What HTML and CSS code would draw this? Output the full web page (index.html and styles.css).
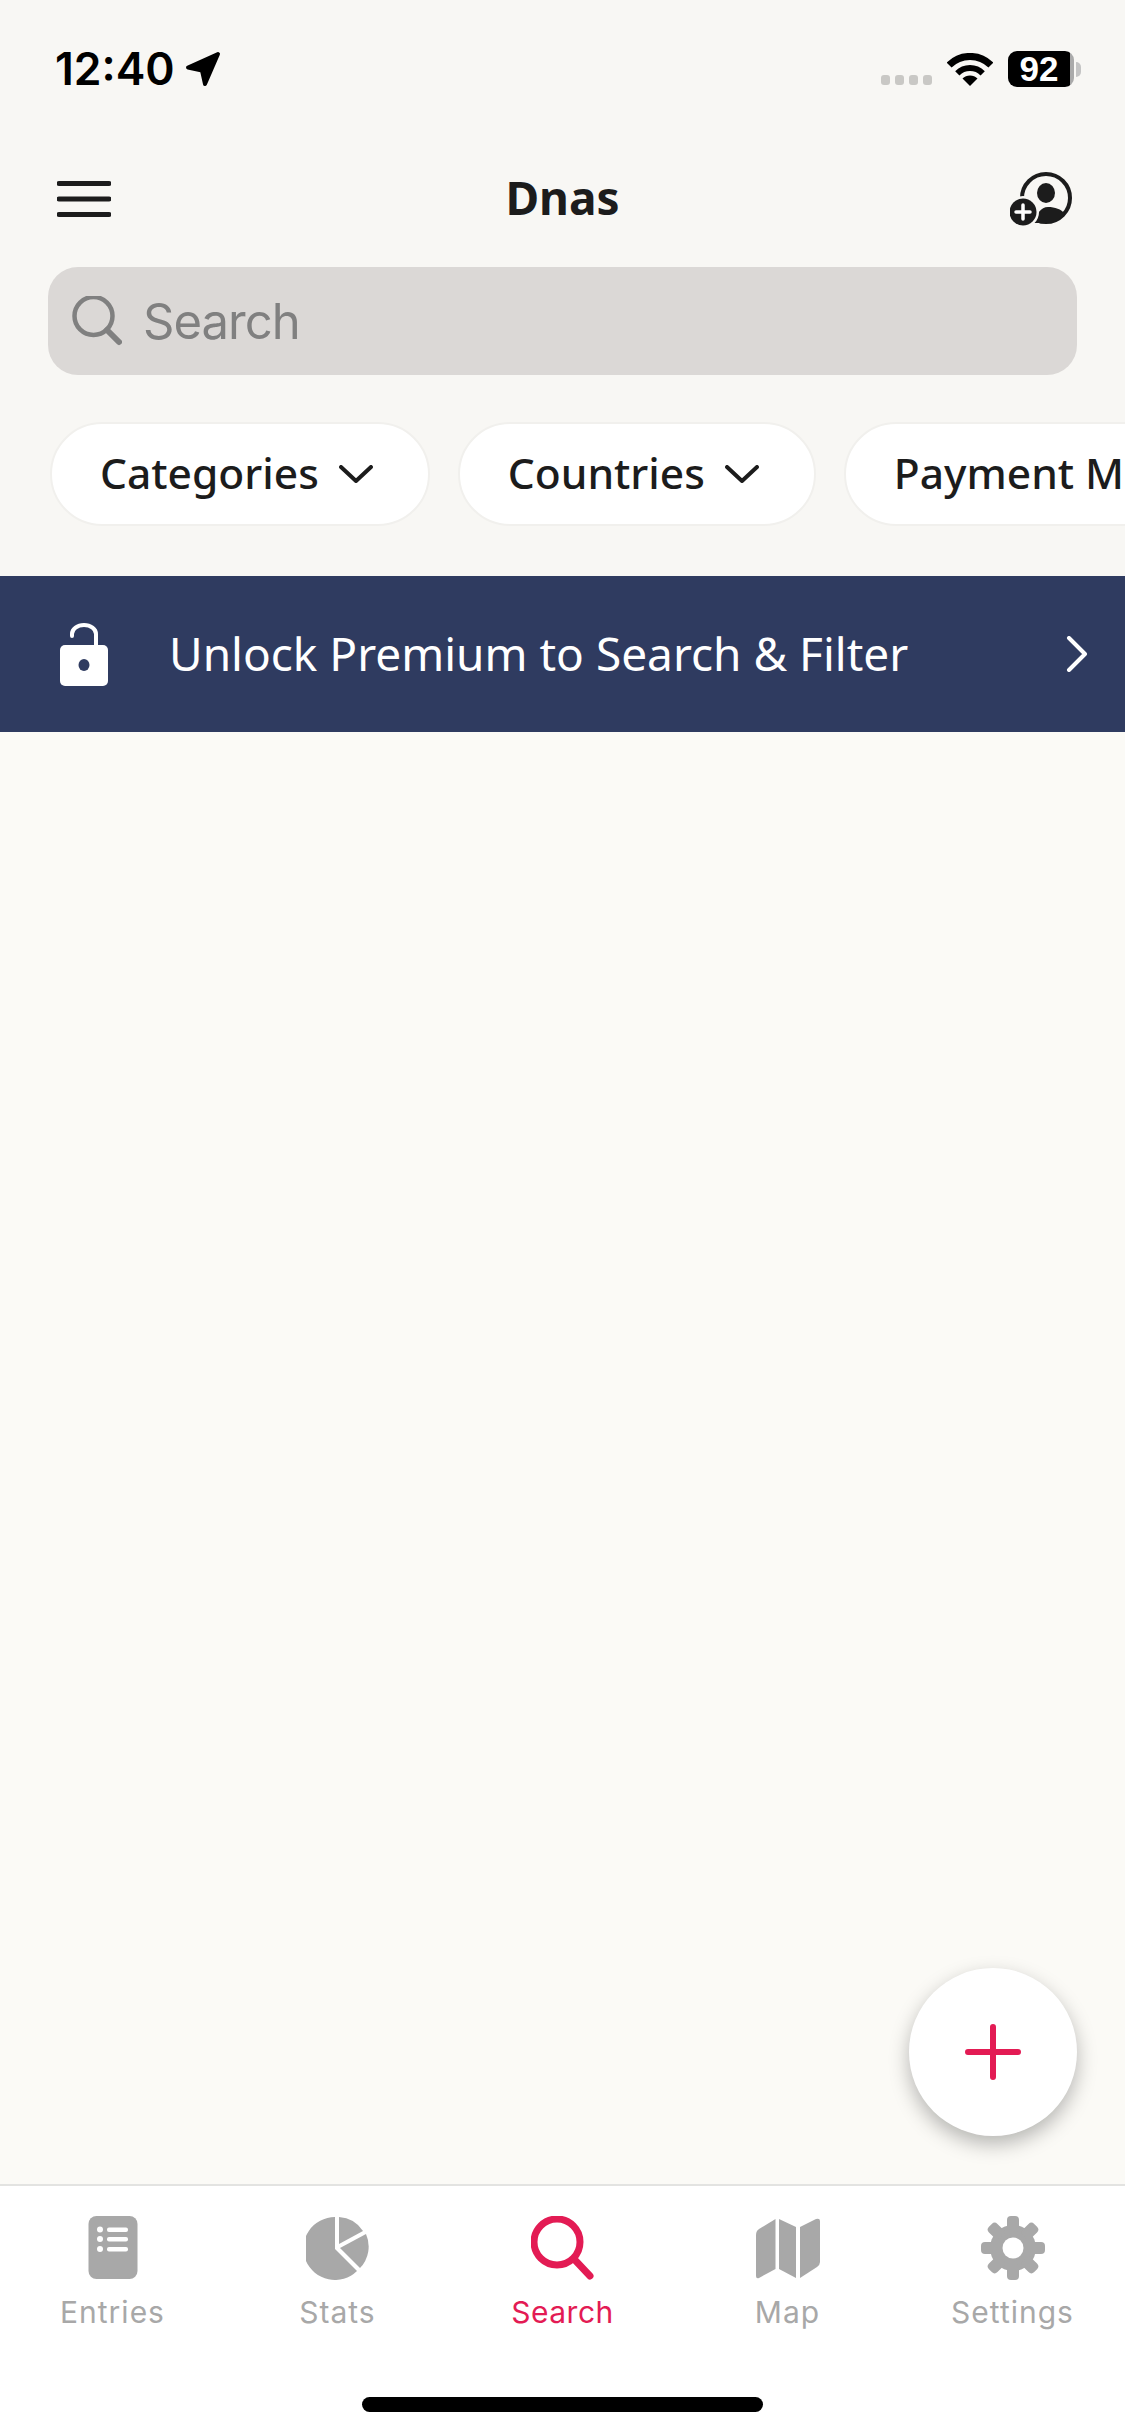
FILE: index.html

```html
<!DOCTYPE html>
<html lang="en">
<head>
  <meta charset="UTF-8" />
  <title>Dnas</title>
  <link rel="stylesheet" href="styles.css">
</head>
<body>
  <div class="app">
    <div class="top">
      <div class="status">
        <span class="time">12:40</span>
        <svg class="arrow" width="36" height="36" viewBox="0 0 36 36"><path d="M33 3L3 16.500l14 3L20 33z"/></svg>
        <div class="dots"><i></i><i></i><i></i><i></i></div>
        <svg class="wifi" width="46" height="33" viewBox="0 0 46 33">
          <path class="wifi-arc" d="M2.100 12.100a29.500 29.500 0 0 1 41.800 0"/>
          <path class="wifi-mid" d="M10.300 20.300a18 18 0 0 1 25.400 0"/>
          <path d="M23 33l-7.500-7.500a10.600 10.600 0 0 1 15 0z"/>
        </svg>
        <div class="battery">92</div>
        <div class="nub"></div>
      </div>

      <div class="header">
        <svg class="menu" width="54" height="36" viewBox="0 0 54 36"><path class="burger" d="M2 2.500h50M2 18h50M2 33.500h50"/></svg>
        <h1>Dnas</h1>
        <svg class="profile" width="64" height="54" viewBox="0 0 64 54">
          <circle class="ring" cx="36" cy="26" r="24"/>
          <ellipse cx="36" cy="21" rx="9" ry="10"/>
          <path d="M24 51c2-9 7-16 14-16 7 0 13 2 17 7a24 24 0 0 1-19 9z"/>
          <circle class="badge-gap" cx="13" cy="40" r="16"/>
          <circle cx="13" cy="40" r="13.500"/>
          <path class="badge-plus" d="M13 33v14M6 40h14"/>
        </svg>
      </div>

      <div class="searchbar">
        <svg width="50" height="50" viewBox="0 0 50 50">
          <circle class="lens" cx="21.500" cy="20" r="19"/>
          <path class="lens handle" d="M35 34l12 12"/>
        </svg>
        <span>Search</span>
      </div>

      <div class="chips">
        <div class="chip"><span>Categories</span><svg width="34" height="18" viewBox="0 0 34 18"><path d="M2 2l15 14L32 2"/></svg></div>
        <div class="chip"><span>Countries</span><svg width="34" height="18" viewBox="0 0 34 18"><path d="M2 2l15 14L32 2"/></svg></div>
        <div class="chip"><span>Payment Methods</span><svg width="34" height="18" viewBox="0 0 34 18"><path d="M2 2l15 14L32 2"/></svg></div>
      </div>
    </div>

    <div class="banner">
      <svg width="48" height="63" viewBox="0 0 48 63">
        <path class="shackle" d="M12 13v-2a12 9 0 0 1 24 0v13"/>
        <rect y="22" width="48" height="41" rx="5" fill="#fff"/>
        <ellipse cx="24" cy="42" rx="5.500" ry="6" fill="#2f3b60"/>
      </svg>
      <span>Unlock Premium to Search &amp; Filter</span>
      <svg class="go" width="22" height="36" viewBox="0 0 22 36"><path d="M3 2l16 16L3 34"/></svg>
    </div>

    <div class="main">
      <div class="fab">
        <svg width="56" height="56" viewBox="0 0 56 56"><path d="M28 3v50M3 28h50"/></svg>
      </div>
    </div>

    <div class="tabbar">
      <div class="tabs">
        <div class="tab">
          <svg width="64" height="64" viewBox="0 0 64 64">
            <rect x="7.500" y="0" width="49" height="63" rx="8" fill="#a8a8a8"/>
            <g fill="#fff">
              <circle cx="19" cy="13.500" r="3"/><circle cx="19" cy="23" r="3"/><circle cx="19" cy="33" r="3"/>
              <rect x="26" y="11.500" width="21" height="4.500" rx="2"/>
              <rect x="26" y="21" width="21" height="4.500" rx="2"/>
              <rect x="26" y="31" width="21" height="4.500" rx="2"/>
            </g>
          </svg>
          <span>Entries</span>
        </div>
        <div class="tab">
          <svg width="64" height="64" viewBox="0 0 64 64" fill="#a8a8a8">
            <path d="M29 1v32l22 22A31.500 31.500 0 1 1 29 1z"/>
            <path d="M33 1a31 31 0 0 1 24 14L33 28z"/>
            <path d="M34 32l26-14a31 31 0 0 1-6 34z"/>
          </svg>
          <span>Stats</span>
        </div>
        <div class="tab active">
          <svg width="64" height="64" viewBox="0 0 64 64">
            <circle class="tab-lens" cx="26" cy="26" r="23"/>
            <path class="tab-lens" d="M43 43l16 17"/>
          </svg>
          <span>Search</span>
        </div>
        <div class="tab">
          <svg width="64" height="64" viewBox="0 0 64 64" fill="#a8a8a8">
            <path d="M19.500 3v50L3 62q-3 1-3-2V19q0-4 3-6z"/>
            <path d="M23 3l17 8v51l-17-9z"/>
            <path d="M44 11l16-8q4-1 4 2v41q0 3-3 5l-17 11z"/>
          </svg>
          <span>Map</span>
        </div>
        <div class="tab">
          <svg width="64" height="64" viewBox="0 0 64 64" fill="#a8a8a8">
            <circle cx="32" cy="32" r="23"/>
            <rect x="26" y="0" width="12" height="16" rx="4"/>
            <rect x="26" y="0" width="12" height="16" rx="4" transform="rotate(45 32 32)"/>
            <rect x="26" y="0" width="12" height="16" rx="4" transform="rotate(90 32 32)"/>
            <rect x="26" y="0" width="12" height="16" rx="4" transform="rotate(135 32 32)"/>
            <rect x="26" y="0" width="12" height="16" rx="4" transform="rotate(180 32 32)"/>
            <rect x="26" y="0" width="12" height="16" rx="4" transform="rotate(225 32 32)"/>
            <rect x="26" y="0" width="12" height="16" rx="4" transform="rotate(270 32 32)"/>
            <rect x="26" y="0" width="12" height="16" rx="4" transform="rotate(315 32 32)"/>
            <circle cx="32" cy="32" r="10.500" fill="#fff"/>
          </svg>
          <span>Settings</span>
        </div>
      </div>
      <div class="home"></div>
    </div>
  </div>
</body>
</html>
```

FILE: styles.css

```css
body {
  margin: 0;
  font-family: "Noto Sans", sans-serif;
  color: #1c1c1c;
}
svg {
  display: block;
  flex: none;
}
.app {
  width: 1125px;
  height: 2436px;
  display: flex;
  flex-direction: column;
  overflow: hidden;
  background: #fbfaf6;
}
.top {
  background: #f8f7f4;
  height: 576px;
  box-sizing: border-box;
  padding-top: 51px;
}

/* status bar */
.status {
  display: flex;
  align-items: center;
  height: 36px;
  padding: 0 44px 0 55px;
}
.time {
  font-family: Inter, sans-serif;
  font-weight: 600;
  font-size: 44.500px;
  line-height: 36px;
  color: #000;
}
.arrow {
  margin-left: 10px;
}
.arrow path {
  fill: #000;
  stroke: #000;
  stroke-width: 4;
  stroke-linejoin: round;
}
.dots {
  display: flex;
  gap: 5px;
  margin-left: auto;
  align-self: flex-end;
  margin-bottom: 2px;
}
.dots i {
  width: 9px;
  height: 10px;
  border-radius: 3px;
  background: #c9c8c5;
}
.wifi {
  margin-left: 15px;
}
.wifi-arc {
  fill: none;
  stroke: #000;
  stroke-width: 7;
}
.wifi-mid {
  fill: none;
  stroke: #000;
  stroke-width: 6;
}
.battery {
  width: 66px;
  height: 36px;
  margin-left: 15px;
  border-radius: 9px;
  background: linear-gradient(90deg, #000 94%, #aaa 94%);
  color: #fff;
  font-family: "Liberation Sans", sans-serif;
  font-weight: 700;
  font-size: 35px;
  line-height: 36px;
  text-align: center;
  padding-right: 4px;
  box-sizing: border-box;
}
.nub {
  width: 5px;
  height: 15px;
  margin-left: 2px;
  border-radius: 0 8px 8px 0;
  background: #c4c4c4;
}

/* header */
.header {
  display: grid;
  grid-template-columns: 1fr auto 1fr;
  align-items: center;
  height: 54px;
  margin-top: 85px;
  padding: 0 51px;
}
.menu {
  margin-left: 6px;
}
.burger {
  fill: none;
  stroke: #1c1c1c;
  stroke-width: 5;
  stroke-linecap: round;
}
h1 {
  margin: 0 0 3px;
  font-size: 46px;
  font-weight: 700;
  line-height: 51px;
}
.profile {
  justify-self: end;
  fill: #1c1c1c;
}
.ring {
  fill: none;
  stroke: #1c1c1c;
  stroke-width: 4;
}
.badge-gap {
  fill: #f8f7f4;
}
.badge-plus {
  fill: none;
  stroke: #fff;
  stroke-width: 3.500;
  stroke-linecap: round;
}

/* search */
.searchbar {
  display: flex;
  align-items: center;
  gap: 21px;
  height: 108px;
  margin: 41px 48px 0;
  padding-left: 24px;
  border-radius: 30px;
  background: #dbd8d6;
  color: #808080;
  font-family: Inter, sans-serif;
  font-size: 49px;
  letter-spacing: -1px;
}
.lens {
  fill: none;
  stroke: #808080;
  stroke-width: 4.500;
}
.handle {
  stroke-width: 6;
  stroke-linecap: round;
}

/* filter chips */
.chips {
  display: flex;
  gap: 28px;
  margin-top: 47px;
  padding-left: 50px;
  overflow: hidden;
}
.chip {
  display: flex;
  align-items: center;
  gap: 20px;
  flex: none;
  height: 104px;
  box-sizing: border-box;
  padding: 0 55px 0 48px;
  border: 2px solid #f1f0ed;
  border-radius: 52px;
  background: #fff;
  font-size: 42.500px;
  font-weight: 500;
  white-space: nowrap;
}
.chip span {
  margin-bottom: 4px;
}
.chip path {
  fill: none;
  stroke: #1c1c1c;
  stroke-width: 4;
  stroke-linecap: round;
  stroke-linejoin: round;
}

/* premium banner */
.banner {
  display: flex;
  align-items: center;
  flex: none;
  height: 156px;
  padding: 0 37px 0 60px;
  background: #2f3b60;
  color: #fff;
  font-size: 46px;
}
.banner span {
  margin-left: 61px;
  margin-bottom: 2px;
}
.shackle, .go path {
  fill: none;
  stroke: #fff;
  stroke-width: 4;
  stroke-linecap: round;
  stroke-linejoin: round;
}
.go {
  margin-left: auto;
}

/* content + floating button */
.main {
  flex: 1;
  position: relative;
}
.fab {
  position: absolute;
  left: 909px;
  bottom: 48px;
  width: 168px;
  height: 168px;
  display: flex;
  align-items: center;
  justify-content: center;
  border-radius: 50%;
  background: #fff;
  box-shadow: 0 8px 20px rgba(0,0,0,0.28);
}
.fab path {
  fill: none;
  stroke: #e31b54;
  stroke-width: 6;
  stroke-linecap: round;
}

/* tab bar */
.tabbar {
  flex: none;
  height: 252px;
  box-sizing: border-box;
  border-top: 2px solid #e3e3e1;
  background: #fff;
  padding-top: 30px;
  display: flex;
  flex-direction: column;
}
.tabs {
  display: grid;
  grid-template-columns: repeat(5, 225px);
}
.tab {
  display: flex;
  flex-direction: column;
  align-items: center;
  color: #a8a8a8;
  font-family: Inter, sans-serif;
  font-size: 30px;
  line-height: 36px;
  letter-spacing: 1px;
}
.tab span {
  margin-top: 14px;
}
.tab.active {
  color: #e31b54;
  letter-spacing: 0.500px;
}
.tab-lens {
  fill: none;
  stroke: #e31b54;
  stroke-width: 7;
  stroke-linecap: round;
}
.home {
  width: 401px;
  height: 15px;
  margin: auto auto 24px;
  border-radius: 8px;
  background: #000;
}
```
